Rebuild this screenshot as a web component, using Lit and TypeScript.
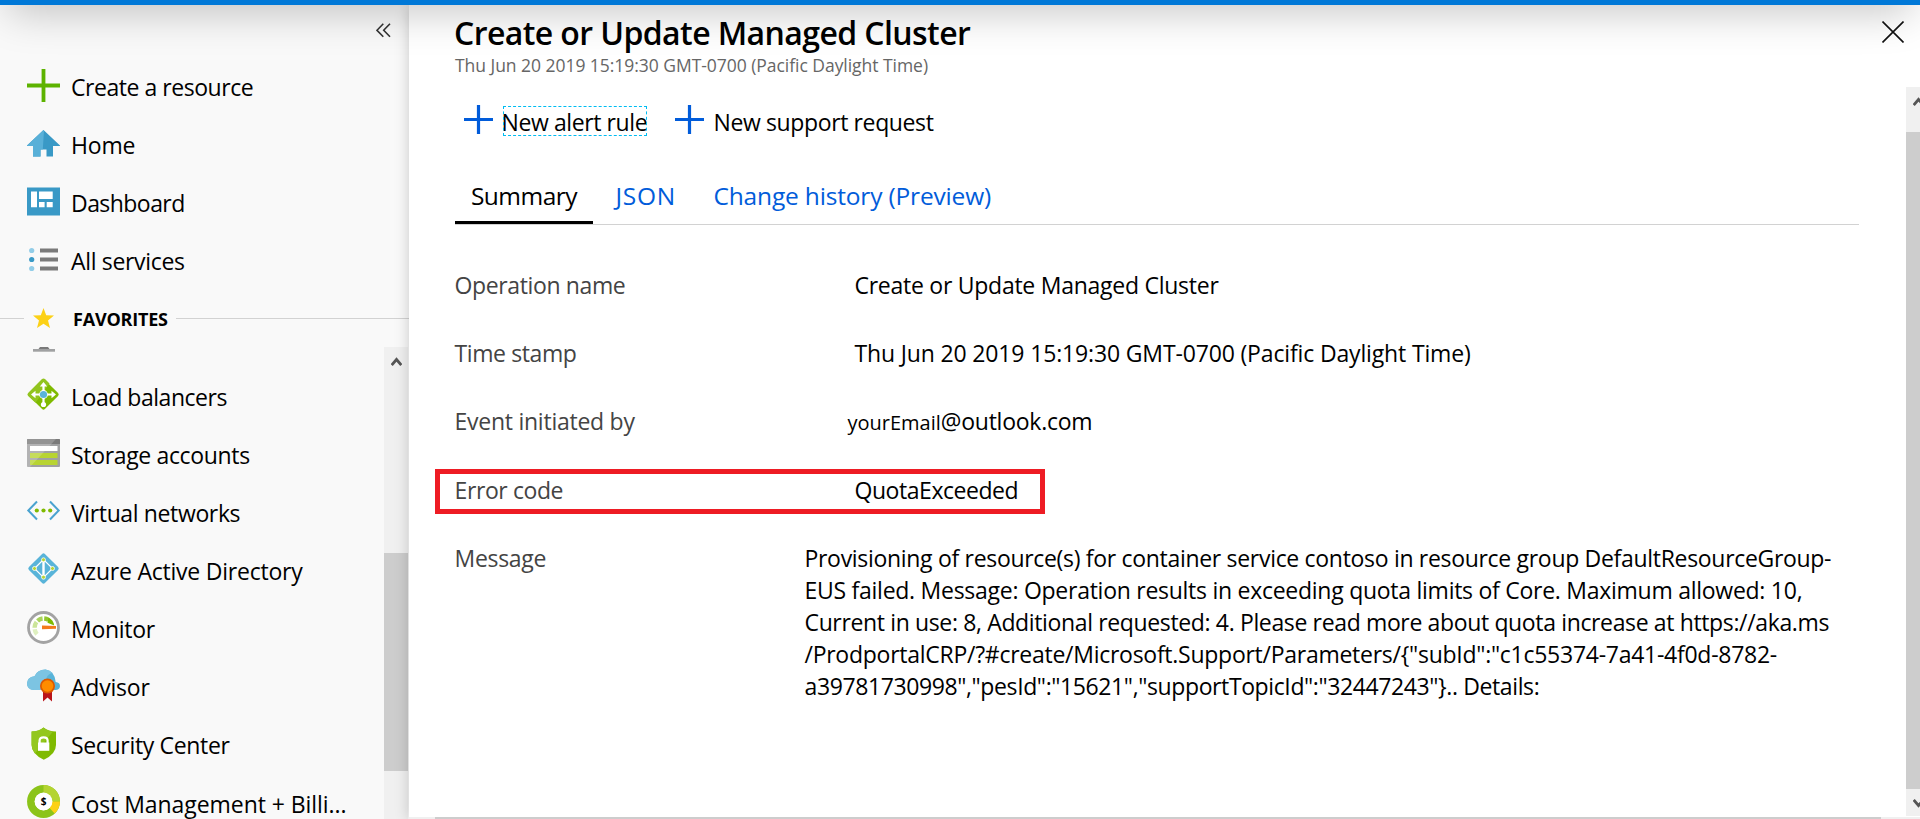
import { LitElement, html, svg, css, TemplateResult } from 'lit';
import { customElement, property } from 'lit/decorators.js';
import { styleMap } from 'lit/directives/style-map.js';

interface Label { text: string; track?: number; }
interface NavItem extends Label { icon: string; }

const TOP_NAV: NavItem[] = [
  { icon: 'plus', text: 'Create a resource', track: -0.46 },
  { icon: 'home', text: 'Home', track: -0.2 },
  { icon: 'dashboard', text: 'Dashboard', track: -0.55 },
  { icon: 'list', text: 'All services', track: -0.33 },
];

const FAVORITES: NavItem[] = [
  { icon: 'balancer', text: 'Load balancers', track: -0.47 },
  { icon: 'storage', text: 'Storage accounts', track: -0.34 },
  { icon: 'network', text: 'Virtual networks', track: -0.37 },
  { icon: 'directory', text: 'Azure Active Directory', track: -0.22 },
  { icon: 'monitor', text: 'Monitor', track: -0.3 },
  { icon: 'advisor', text: 'Advisor', track: -0.2 },
  { icon: 'security', text: 'Security Center', track: -0.33 },
  { icon: 'cost', text: 'Cost Management + Billi...', track: -0.06 },
];

const MESSAGE: Label[] = [
  { text: 'Provisioning of resource(s) for container service contoso in resource group DefaultResourceGroup-', track: -0.31 },
  { text: 'EUS failed. Message: Operation results in exceeding quota limits of Core. Maximum allowed: 10,', track: -0.265 },
  { text: 'Current in use: 8, Additional requested: 4. Please read more about quota increase at https://aka.ms', track: -0.36 },
  { text: '/ProdportalCRP/?#create/Microsoft.Support/Parameters/{"subId":"c1c55374-7a41-4f0d-8782-', track: -0.265 },
  { text: 'a39781730998","pesId":"15621","supportTopicId":"32447243"}.. Details:', track: -0.39 },
];

const tracked = (l: Label, cls = '') =>
  html`<span class=${cls} style=${styleMap({ letterSpacing: `${l.track ?? 0}px` })}>${l.text}</span>`;

const GLYPHS: Record<string, TemplateResult> = {
  plus: svg`<path d="M0 16.5H33M16.5 0V33" stroke="#5db300" stroke-width="3.8"/>`,
  home: svg`
    <path d="M16.5 3L33 18.5V19H26V29.5H19.5V22.5H13.5V29.5H6V19H0V18.5Z" fill="#3999c6"/>
    <path d="M16.5 3L17 3.5L15.8 22.5H13.5V29.5H6V19H0V18.5Z" fill="#59b0d8"/>`,
  dashboard: svg`
    <rect y="2.5" width="33" height="28" fill="#3999c6"/>
    <path d="M4 6.5h6v15.7H4zM12 6.5h13.7v7.5H12zM12 17h5.6v5.2H12zM19.7 17h6v5.2h-6z" fill="#fff"/>`,
  list: svg`
    <path d="M13 7.5H31M13 16.5H31M13 25.5H31" stroke="#7a7a7a" stroke-width="4"/>
    <circle cx="4.7" cy="7.5" r="2.6" fill="#92cde8"/><circle cx="4.7" cy="16.5" r="2.6" fill="#3999c6"/>
    <circle cx="4.7" cy="25.5" r="2.6" fill="#92cde8"/>`,
  balancer: svg`
    <rect x="5.2" y="5.2" width="22.6" height="22.6" rx="2" fill="#7fba00" transform="rotate(45 16.5 16.5)"/>
    <path d="M15 1.1Q16.5 -.3 18 1.1L22.5 5.6L8.5 24.8L1.1 18Q-.3 16.5 1.1 15Z" fill="#92c41f"/>
    <path d="M16.5 7V26M6 16.5H27" stroke="#fff" stroke-width="2.2"/>
    <path d="M16.5 4L20.2 8.500H12.800ZM4 16.5L8.500 12.800V20.200ZM29 16.5L24.500 12.800V20.200Z" fill="#fff"/>
    <circle cx="16.5" cy="26.5" r="2.6" fill="#fff"/>
    <circle cx="16.5" cy="16.5" r="4.4" fill="#fff"/><circle cx="16.5" cy="16.5" r="3.6" fill="#59b4d9"/>`,
  storage: svg`
    <rect y="3" width="33" height="28" rx="1" fill="#a0a1a2"/>
    <path d="M0 4Q0 3 1 3H32Q33 3 33 4V8H0Z" fill="#7a7a7a"/>
    <rect x="3" y="10" width="27.500" height="5" fill="#fff"/>
    <path d="M3 17H30.500V22H3ZM3 24H30.500V29H3Z" fill="#b8d432"/>
    <path d="M0 4Q0 3 1 3H29L3 30.900H1Q0 30.900 0 30Z" fill="#fff" opacity=".2"/>`,
  network: svg`
    <path d="M10 7.5L1.300 16.500L10 25.500M23 7.500L31.700 16.500L23 25.500" fill="none" stroke="#4aa3d0" stroke-width="2"/>
    <g fill="#7fba00"><circle cx="9.800" cy="16.500" r="2.100"/><circle cx="16.500" cy="16.500" r="2.100"/><circle cx="23.200" cy="16.500" r="2.100"/></g>`,
  directory: svg`
    <rect x="5.200" y="5.200" width="22.600" height="22.600" rx="2" fill="#59b4d9" transform="rotate(45 16.500 16.500)"/>
    <path d="M16.500 7.500L7.500 16.500L16.500 25.500L25.500 16.500Z" fill="none" stroke="#fff" stroke-width="1.200"/>
    <path d="M16.500 7.500V25.500" stroke="#fff" stroke-width="2.400"/>
    <g fill="#b8d432" stroke="#fff" stroke-width=".8"><circle cx="16.500" cy="7.800" r="2"/><circle cx="7.500" cy="16.500" r="2"/><circle cx="25.500" cy="16.500" r="2"/><circle cx="16.500" cy="25.200" r="2"/></g>`,
  monitor: svg`
    <circle cx="16.500" cy="16.500" r="15" fill="#fff" stroke="#a3a3a3" stroke-width="2.800"/>
    <g fill="none" stroke-width="4.400">
      <path d="M10 23.200A9 9 0 0 1 7.700 18.300" stroke="#dff0c0"/><path d="M7.600 16.800A9 9 0 0 1 9.500 11" stroke="#cbe59a"/>
      <path d="M10.600 9.800A9 9 0 0 1 15.600 7.500" stroke="#a9d35a"/><path d="M17.200 7.500A9 9 0 0 1 21.500 9" stroke="#92c62f"/>
    </g>
    <path d="M21.500 6.500Q26.500 9 27.200 14.500L20.500 11.700Z" fill="#7fba00"/>
    <path d="M15 14.600L29 15V17.700L15 18.200Z" fill="#f47b1c"/>`,
  advisor: svg`
    <path d="M7 21Q0 20.500 0 14.200Q.300 8 7.500 7.200Q10.500 .500 18.500 .500Q27.500 1.500 28.700 13Q33 13.500 33 17.200Q32.500 21 28.500 21Z" fill="#59b4d9"/>
    <path d="M7 21Q0 20.500 0 14.200Q.300 8 7.500 7.200Q10.500 .500 18.500 .500Q23 1 25.500 4Q17.500 5 17.700 21Z" fill="#7cc4e2"/>
    <path d="M16 22H25V32.500L20.500 28.500L16 32.500Z" fill="#ba141a"/>
    <circle cx="20.500" cy="17" r="7.500" fill="#dd5900"/><circle cx="20.500" cy="17" r="5.800" fill="#ff8c00"/>`,
  security: svg`
    <path d="M4.600 4.500Q12 4.500 16.500 .500Q21.500 4.500 29 4.500V18Q29 27 16.800 32.800Q4.600 27 4.600 18Z" fill="#7fba00"/>
    <path d="M4.600 4.500Q12 4.500 16.500 .500Q21.500 4.500 26 4.500L8 26.500Q4.600 22.500 4.600 18Z" fill="#93c71e"/>
    <path d="M12.600 16V13.500Q12.600 10.300 16.600 10.300Q20.600 10.300 20.600 13.500V16" fill="none" stroke="#fff" stroke-width="2.200"/>
    <rect x="11" y="15.500" width="11.300" height="8.300" fill="#fff"/>`,
  cost: svg`
    <g fill="none" stroke-width="7.700">
      <circle cx="16.500" cy="16.500" r="12.600" stroke="#8cc41a"/>
      <path d="M16.500 3.900A12.600 12.600 0 0 1 29.100 16.500" stroke="#b4d432"/>
      <path d="M29.100 16.500A12.600 12.600 0 0 1 25 25.700" stroke="#fcd116"/>
    </g>
    <circle cx="16.500" cy="16.500" r="8.900" fill="#fff"/>
    <text x="16.500" y="20.200" text-anchor="middle" font-family="Open Sans, sans-serif" font-size="10" font-weight="700">$</text>`,
};

@customElement('portal-icon')
class PortalIcon extends LitElement {
  static styles = css`
    :host { display: block; width: 33px; height: 33px; }
    svg { display: block; overflow: visible; }
  `;
  @property() name = '';
  render() {
    return html`<svg width="33" height="33" viewBox="0 0 33 33">${GLYPHS[this.name]}</svg>`;
  }
}

@customElement('portal-sidebar')
class PortalSidebar extends LitElement {
  static styles = css`
    :host { display: flex; flex-direction: column; background: #f9f9f9; min-height: 0; }
    .collapse { flex: none; height: 52px; display: flex; justify-content: flex-end; padding: 18px 18px 0 0; box-sizing: border-box; }
    .item { height: 58px; box-sizing: border-box; flex: none; display: flex; align-items: center; padding: 2px 0 0 27px; gap: 11px; line-height: 32px; white-space: nowrap; }
    .item portal-icon { margin-bottom: 4px; }
    .fav-head { height: 58px; flex: none; display: flex; align-items: center; font-size: 18px; font-weight: 700; }
    .fav-head span { margin: 1px 8px 0 19px; letter-spacing: -0.2px; }
    .rule { height: 1px; background: #d2d2d2; }
    .lead { width: 24px; margin-right: 9px; }
    .rest { flex: 1; }
    .scroll { flex: 1; min-height: 0; display: flex; }
    .list { flex: 1; overflow: hidden; }
    .list .item { height: 58.15px; }
    .clipped { height: 19.500px; padding-left: 33px; }
    .track { width: 24px; margin-right: 1px; background: #f0f0f0; }
    .arrow { display: block; margin: 10px 0 0 7px; }
    .thumb { margin-top: 187px; height: 218px; background: #cdcdcd; }
    svg { display: block; }
  `;
  item(i: NavItem) {
    return html`<div class="item"><portal-icon name=${i.icon}></portal-icon>${tracked(i)}</div>`;
  }
  render() {
    return html`
      <div class="collapse">
        <svg width="15" height="15" viewBox="0 0 15 15" fill="none" stroke="#333" stroke-width="1.6">
          <path d="M7.300 .800L1 7.300L7.300 13.800M14 .800L7.700 7.300L14 13.800"/>
        </svg>
      </div>
      ${TOP_NAV.map((i) => this.item(i))}
      <div class="fav-head">
        <div class="rule lead"></div>
        <svg width="21" height="21" viewBox="0 0 21 21"><path d="M10.500 0L13.200 7.200L21 7.600L15 12.500L17 20L10.500 15.800L4 20L6 12.500L0 7.600L7.800 7.200Z" fill="#fcd116"/></svg>
        <span>FAVORITES</span>
        <div class="rule rest"></div>
      </div>
      <div class="scroll">
        <div class="list">
          <div class="clipped"><svg width="22" height="5" viewBox="0 0 22 5"><path d="M7 0H15L16.500 2H5.500Z" fill="#7a7a7a"/><rect y="2" width="22" height="2.700" fill="#a0a1a2"/></svg></div>
          ${FAVORITES.map((i) => this.item(i))}
        </div>
        <div class="track">
          <svg class="arrow" width="11" height="9" viewBox="0 0 11 9"><path d="M.700 8L5.500 2.500L10.300 8" fill="none" stroke="#555" stroke-width="2.800"/></svg>
          <div class="thumb"></div>
        </div>
      </div>`;
  }
}

@customElement('event-blade')
class EventBlade extends LitElement {
  static styles = css`
    :host { display: flex; flex-direction: column; min-width: 0; background: #fff; box-shadow: 0 0 14px rgba(0, 0, 0, 0.2); }
    header { flex: none; height: 82px; box-sizing: border-box; padding: 7px 16px 0 45px; display: flex; justify-content: space-between; }
    h1 { margin: 0; font-size: 32px; font-weight: 600; line-height: 41px; letter-spacing: -0.59px; }
    .sub { font-size: 17.500px; line-height: 25px; color: #666; padding-left: 1px; letter-spacing: -0.04px; }
    .close { margin-top: 9px; }
    svg { display: block; }
    .body { flex: 1; min-height: 0; display: flex; }
    .content { flex: 1; min-width: 0; padding: 19px 47px 0 46px; }
    .toolbar { display: flex; height: 30px; }
    .cmd { display: flex; }
    .cmd svg { margin: -2px 10px 0 9px; }
    .cmd + .cmd { margin-left: 19px; }
    .cmd span { line-height: 28px; padding-top: 2px; box-sizing: border-box; height: 30px; white-space: nowrap; margin-left: -0.500px; }
    .cmd .focus { width: 144px; margin-left: 0; text-indent: -1.500px; outline: 1px dashed #00bcf2; outline-offset: -1px; }
    .tabs { display: flex; margin-top: 43px; border-bottom: 1px solid #d2d2d2; font-size: 24.500px; line-height: 33px; color: #015cda; }
    .tab { height: 45px; box-sizing: border-box; white-space: nowrap; }
    .active { width: 138px; text-align: center; color: #000; border-bottom: 3px solid #000; }
    .json { width: 98px; margin-left: 22.500px; letter-spacing: 0.7px; }
    .details { padding-top: 44px; line-height: 32px; }
    .row { display: flex; height: 68.200px; position: relative; white-space: nowrap; }
    .label { width: 398px; color: #444; flex: none; margin-left: -0.500px; }
    .value { margin-left: 2px; }
    .mail { margin-left: -5px; }
    .alias { font-size: 20px; }
    .message { margin-left: -48px; }
    .message span { display: block; }
    .mark { position: absolute; left: -20px; top: -4.600px; width: 610px; height: 45px; box-sizing: border-box; border: 5px solid #ee1c24; }
    .vscroll { width: 14px; overflow: hidden; background: #f0f0f0; display: flex; flex-direction: column; margin-bottom: 1px; }
    .vscroll svg { flex: none; margin: 10px 0 8px 7px; }
    .vthumb { flex: 1; background: #cdcdcd; margin-top: 18px; }
    .hscroll { flex: none; height: 2px; background: #f0f0f0; padding: 0 39px 0 26px; }
    .hthumb { height: 2px; background: #cdcdcd; }
  `;
  row(label: Label, value: TemplateResult, mark = false) {
    return html`<div class="row">${tracked(label, 'label')}${value}${mark ? html`<div class="mark"></div>` : ''}</div>`;
  }
  render() {
    const plus = html`<svg width="29" height="31" viewBox="0 0 29 31"><path d="M0 15.500H29M14.500 1V30" stroke="#015cda" stroke-width="3.200"/></svg>`;
    return html`
      <header>
        <div>
          <h1>Create or Update Managed Cluster</h1>
          <div class="sub">Thu Jun 20 2019 15:19:30 GMT-0700 (Pacific Daylight Time)</div>
        </div>
        <svg class="close" width="22" height="22" viewBox="0 0 22 22"><path d="M.500 .500L21.500 21.500M21.500 .500L.500 21.500" stroke="#111" stroke-width="1.600"/></svg>
      </header>
      <div class="body">
        <div class="content">
          <div class="toolbar">
            <div class="cmd">${plus}${tracked({ text: 'New alert rule', track: -0.4 }, 'focus')}</div>
            <div class="cmd">${plus}${tracked({ text: 'New support request', track: -0.38 })}</div>
          </div>
          <div class="tabs">
            <div class="tab active">${tracked({ text: 'Summary', track: -0.5 })}</div>
            <div class="tab json">JSON</div>
            <div class="tab">${tracked({ text: 'Change history (Preview)', track: -0.17 })}</div>
          </div>
          <div class="details">
            ${this.row({ text: 'Operation name', track: -0.37 }, tracked({ text: 'Create or Update Managed Cluster', track: -0.26 }, 'value'))}
            ${this.row({ text: 'Time stamp', track: -0.4 }, tracked({ text: 'Thu Jun 20 2019 15:19:30 GMT-0700 (Pacific Daylight Time)', track: -0.15 }, 'value'))}
            ${this.row({ text: 'Event initiated by', track: -0.25 }, html`<span class="mail"><span class="alias">yourEmail</span>${tracked({ text: '@outlook.com', track: -0.25 })}</span>`)}
            ${this.row({ text: 'Error code', track: -0.4 }, tracked({ text: 'QuotaExceeded', track: -0.45 }, 'value'), true)}
            ${this.row({ text: 'Message', track: -0.3 }, html`<div class="message">${MESSAGE.map((m) => tracked(m))}</div>`)}
          </div>
        </div>
        <div class="vscroll">
          <svg width="11" height="9" viewBox="0 0 11 9"><path d="M.700 8L5.500 2.500L10.300 8" fill="none" stroke="#555" stroke-width="2.800"/></svg>
          <div class="vthumb"></div>
          <svg width="11" height="9" viewBox="0 0 11 9"><path d="M.700 1L5.500 6.500L10.300 1" fill="none" stroke="#555" stroke-width="2.800"/></svg>
        </div>
      </div>
      <div class="hscroll"><div class="hthumb"></div></div>`;
  }
}

@customElement('app-root')
class AppRoot extends LitElement {
  static styles = css`
    :host { display: flex; flex-direction: column; position: relative; width: 100%; height: 819px; overflow: hidden; color: #000; font: 23px "Open Sans", "Noto Sans", sans-serif; }
    .bar { flex: none; height: 5px; background: #0078d7; z-index: 3; }
    .shade { position: absolute; z-index: 2; top: -60px; left: 8px; right: 8px; height: 65px; box-shadow: 0 8px 42px rgba(0, 0, 0, 0.22); pointer-events: none; }
    .main { flex: 1; min-height: 0; display: flex; }
    portal-sidebar { width: 409px; flex: none; }
    event-blade { flex: 1; z-index: 1; }
  `;
  render() {
    return html`
      <div class="bar"></div>
      <div class="shade"></div>
      <div class="main">
        <portal-sidebar></portal-sidebar>
        <event-blade></event-blade>
      </div>`;
  }
}
